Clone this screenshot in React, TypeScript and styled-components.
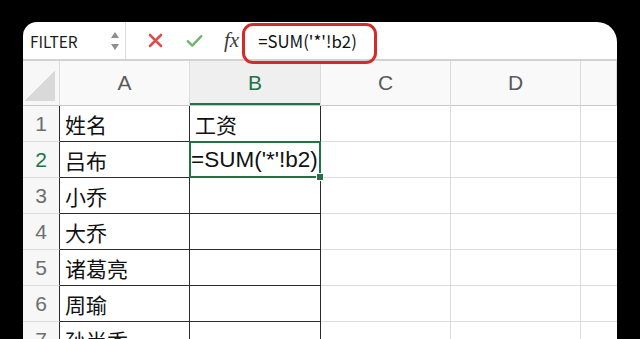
import React from 'react';
import styled, {createGlobalStyle} from 'styled-components';

const GREEN = '#217346';
const TABLE_LINE = '#2b2b2b';
const GRID_LINE = '#dcdcdc';

const COLUMNS = ['A', 'B', 'C', 'D', ''];
const ROWS: [string, string][] = [
    ['姓名', '工资'],
    ['吕布', "=SUM('*'!b2)"],
    ['小乔', ''],
    ['大乔', ''],
    ['诸葛亮', ''],
    ['周瑜', ''],
    ['孙尚香', ''],
];
const SELECTED_ROW = 2;
const SELECTED_COL = 'B';

const GlobalStyle = createGlobalStyle`
    html, body {
        margin: 0;
        padding: 0;
        background: #000;
        overflow: hidden;
    }
    body {
        font-family: "Liberation Sans", "Noto Sans CJK SC", sans-serif;
    }
`;

export default function App() {
    return (
        <>
            <GlobalStyle/>
            <Window>
                <Toolbar>
                    <NameBox>
                        <NameText>FILTER</NameText>
                        <svg width="10" height="20" viewBox="0 0 10 20">
                            <path d="M5 1 L9 7 L1 7 Z" fill="#8e8e8e"/>
                            <path d="M1 13 L9 13 L5 19 Z" fill="#8e8e8e"/>
                        </svg>
                    </NameBox>
                    <ToolIcons>
                        <svg width="15" height="15" viewBox="0 0 15 15">
                            <path d="M2 2 L13 13 M13 2 L2 13" stroke="#de4f4c" strokeWidth="2.6" strokeLinecap="round"/>
                        </svg>
                        <svg width="17" height="14" viewBox="0 0 17 14">
                            <path d="M1.8 7.2 L6.3 11.6 L15.3 2.2" stroke="#72b36e" strokeWidth="2.4" fill="none"
                                  strokeLinecap="round" strokeLinejoin="round"/>
                        </svg>
                        <FxLabel>fx</FxLabel>
                    </ToolIcons>
                    <FormulaText>=SUM('*'!b2)</FormulaText>
                    <Highlight/>
                </Toolbar>

                <Sheet>
                    <Corner><CornerMark/></Corner>
                    {COLUMNS.map((c, i) => (
                        <ColHeader key={i} $active={c === SELECTED_COL}>{c}</ColHeader>
                    ))}
                    {ROWS.map((row, r) => (
                        <React.Fragment key={r}>
                            <RowHeader $active={r + 1 === SELECTED_ROW}>{r + 1}</RowHeader>
                            <Cell $table>{row[0]}</Cell>
                            <Cell $table $selected={r + 1 === SELECTED_ROW}>
                                <CellText $wide={row[1].startsWith('=')}>{row[1]}</CellText>
                            </Cell>
                            <Cell/>
                            <Cell/>
                            <Cell $last/>
                        </React.Fragment>
                    ))}
                </Sheet>
            </Window>
        </>
    );
}

const Window = styled.div`
    position: relative;
    margin: 22px 0 0 23px;
    width: 594px;
    height: 340px;
    background: #fff;
    border-radius: 14px 20px 0 0;
    overflow: hidden;
`

const Toolbar = styled.div`
    display: flex;
    align-items: center;
    height: 37px;
    border-bottom: 2px solid #d2d2d2;
`

const NameBox = styled.div`
    display: flex;
    align-items: center;
    justify-content: space-between;
    box-sizing: border-box;
    width: 103px;
    height: 100%;
    padding: 0 5px 0 7px;
    border-right: 1px solid ${GRID_LINE};
`

const NameText = styled.span`
    font-family: "Noto Sans CJK SC", sans-serif;
    font-size: 15.5px;
    color: #1d1d1d;
`

const ToolIcons = styled.div`
    display: flex;
    align-items: center;
    gap: 23px;
    padding-left: 22px;
`

const FxLabel = styled.span`
    font-family: "Liberation Serif", serif;
    font-style: italic;
    font-size: 21px;
    color: #3c3c3c;
    margin-left: -2px;
`

const FormulaText = styled.span`
    margin-left: 19px;
    font-family: "Noto Sans CJK SC", sans-serif;
    font-size: 16.8px;
    color: #111;
`

const Highlight = styled.div`
    position: absolute;
    left: 219px;
    top: 1px;
    width: 135px;
    height: 41px;
    box-sizing: border-box;
    border: 3px solid #d42a2a;
    border-radius: 11px;
`

const Sheet = styled.div`
    display: grid;
    grid-template-columns: 37px 130px 131px 130px 130px 1fr;
    grid-template-rows: 45px repeat(7, 36px);
`

const Corner = styled.div`
    display: flex;
    align-items: flex-end;
    justify-content: flex-end;
    box-sizing: border-box;
    padding: 0 4px 4px 0;
    background: #f7f7f7;
    border-right: 1px solid ${GRID_LINE};
    border-bottom: 1px solid #c8c8c8;
`

const CornerMark = styled.div`
    width: 31px;
    height: 31px;
    background: linear-gradient(to bottom right, transparent 50%, #d9d9d9 50%);
`

const ColHeader = styled.div<{$active?: boolean}>`
    display: flex;
    align-items: center;
    justify-content: center;
    box-sizing: border-box;
    font-size: 21px;
    color: ${p => p.$active ? GREEN : '#5a5a5a'};
    background: ${p => p.$active ? '#efefef' : '#f9f9f9'};
    border-right: 1px solid ${GRID_LINE};
    border-bottom: 1px solid #c8c8c8;
    box-shadow: ${p => p.$active ? `inset 0 -2px 0 ${GREEN}` : 'none'};
`

const RowHeader = styled.div<{$active?: boolean}>`
    display: flex;
    align-items: center;
    justify-content: center;
    box-sizing: border-box;
    font-size: 21px;
    color: ${p => p.$active ? GREEN : '#6e6e6e'};
    background: #f7f7f7;
    border-right: 1px solid ${TABLE_LINE};
    border-bottom: 1px solid ${GRID_LINE};
`

const Cell = styled.div<{$table?: boolean; $selected?: boolean; $last?: boolean}>`
    position: relative;
    display: flex;
    align-items: center;
    box-sizing: border-box;
    padding-left: 5px;
    font-size: 21px;
    color: #111;
    white-space: nowrap;
    border-right: ${p => p.$last ? 'none' : `1px solid ${p.$table ? TABLE_LINE : GRID_LINE}`};
    border-bottom: 1px solid ${p => p.$table ? TABLE_LINE : GRID_LINE};

    ${p => p.$selected && `
        &::after {
            content: '';
            position: absolute;
            left: -1px;
            top: -1px;
            right: -1px;
            bottom: -1px;
            border: 2px solid ${GREEN};
        }
        &::before {
            content: '';
            position: absolute;
            right: -4px;
            bottom: -4px;
            width: 6px;
            height: 6px;
            background: ${GREEN};
            border: 1px solid #fff;
            z-index: 1;
        }
    `}
`

const CellText = styled.span<{$wide?: boolean}>`
    font-family: ${p => p.$wide ? '"Liberation Sans", sans-serif' : 'inherit'};
    font-size: ${p => p.$wide ? '22.5px' : 'inherit'};
    margin-left: ${p => p.$wide ? '-4px' : '0'};
`
